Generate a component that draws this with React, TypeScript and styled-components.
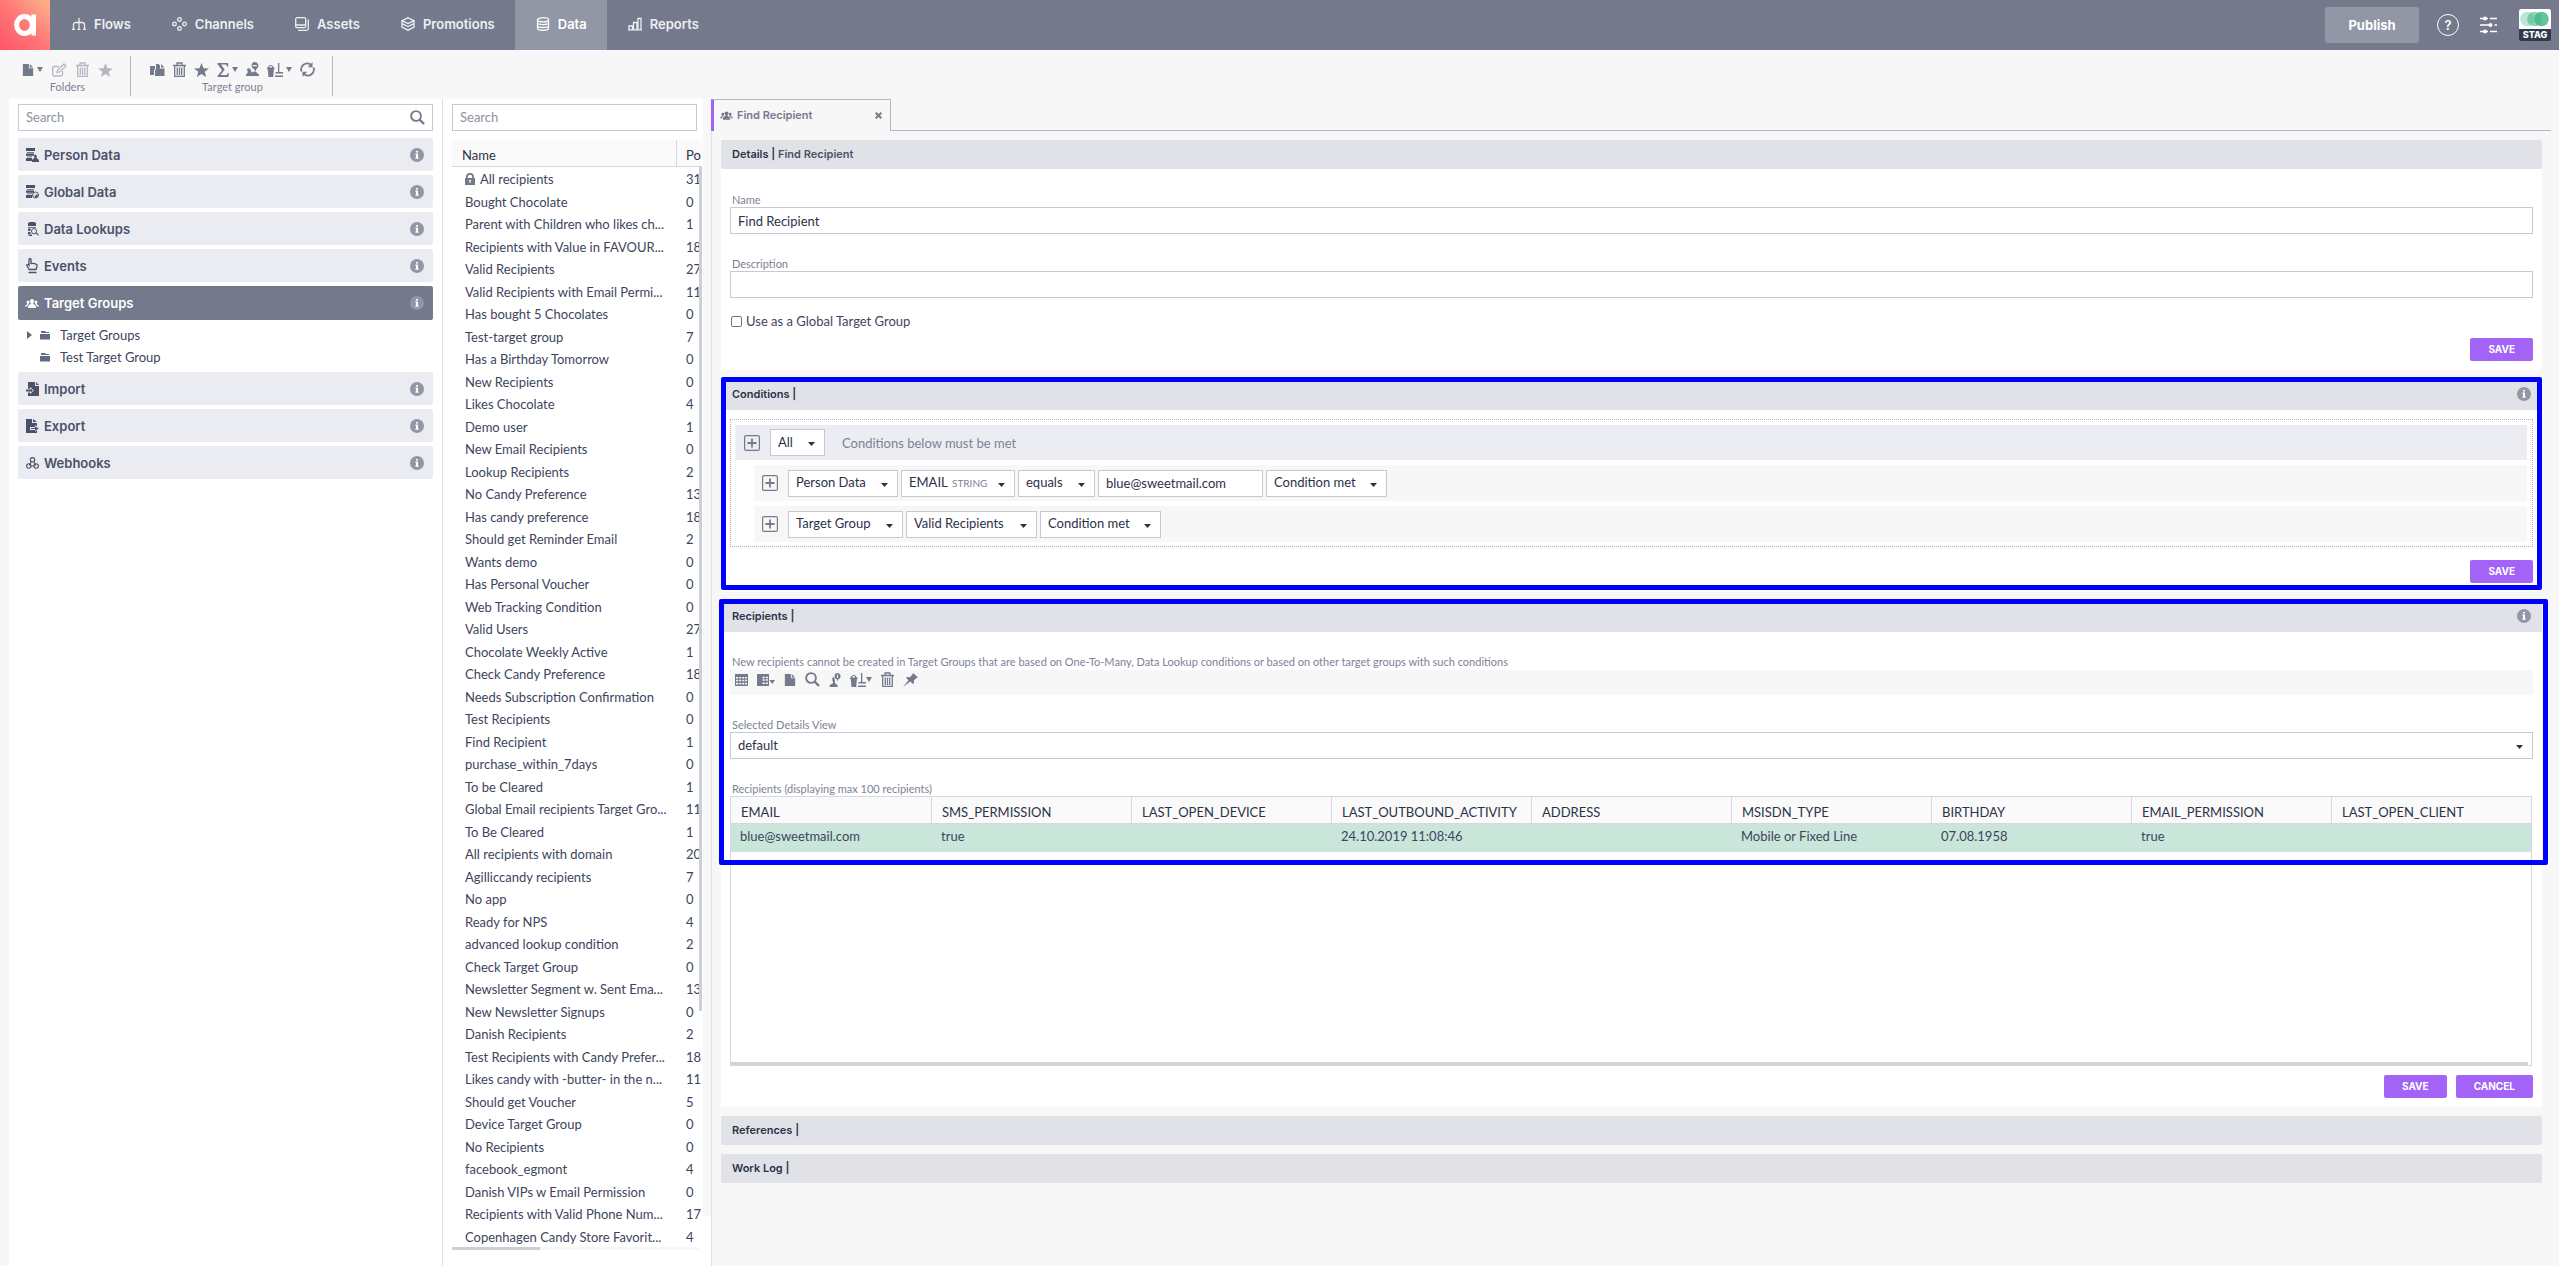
import React from 'react';
import styled, { createGlobalStyle } from 'styled-components';

const c = {
  bar: '#747a8c',
  barActive: '#9297a6',
  page: '#f7f7f7',
  ink: '#3d455c',
  dark: '#2b3247',
  muted: '#7c8294',
  line: '#c6c8d4',
  rule: '#b6bac8',
  head: '#e1e2e8',
  item: '#ebecf1',
  purple: '#a363f7',
};

const body = `Lato, "Open Sans", sans-serif`;
const title = `Inter, "Open Sans", sans-serif`;

const GlobalStyle = createGlobalStyle`
  * { box-sizing: border-box; }
  body { margin: 0; background: ${c.page}; color: ${c.ink}; font: 13px/16px ${body}; }
  button, input, select { font: inherit; color: inherit; margin: 0; }
  button { border: 0; background: none; padding: 0; cursor: pointer; }
  svg { display: block; flex: none; }
`;

/* ---------- icons ---------- */

type IconProps = { w?: number; h?: number };

const Svg = ({ w = 14, h = 14, box = '0 0 14 14', children }: IconProps & { box?: string; children: React.ReactNode }) => (
  <svg width={w} height={h} viewBox={box} fill="currentColor" aria-hidden="true">{children}</svg>
);
const Line = ({ w = 14, h = 14, box = '0 0 14 14', sw = 1.3, children }: IconProps & { box?: string; sw?: number; children: React.ReactNode }) => (
  <svg width={w} height={h} viewBox={box} fill="none" stroke="currentColor" strokeWidth={sw} aria-hidden="true">{children}</svg>
);

const FlowsIcon = () => (
  <Line><path d="M7 1v11.5M1.5 12.500V7.500a2 2 0 0 1 2-2h7a2 2 0 0 1 2 2v5M0 12.300h3M5.500 12.300h3M11 12.300h3" /></Line>
);
const ChannelsIcon = () => (
  <Line w={15} h={14} box="0 0 15 14"><circle cx="7.500" cy="2.500" r="1.800" /><circle cx="7.500" cy="11.500" r="1.800" /><circle cx="2.500" cy="7" r="1.800" /><circle cx="12.500" cy="7" r="1.800" /></Line>
);
const AssetsIcon = () => (
  <Line><rect x="0.700" y="0.700" width="10" height="10" rx="1.500" /><path d="M1 8h9.500M13.300 2.500v9a1.800 1.800 0 0 1-1.800 1.800H3" /></Line>
);
const PromotionsIcon = () => (
  <Line><path d="M7 .8l6 2.900-6 2.900-6-2.900zM1 3.700v3l6 2.900 6-2.900v-3M1 7v3.200L7 13.200l6-3V7" /></Line>
);
const DataIcon = () => (
  <Line><ellipse cx="7" cy="2.800" rx="5.500" ry="2.100" /><path d="M1.500 2.800v8.400c0 1.200 2.500 2.100 5.500 2.100s5.500-.9 5.500-2.100V2.800M1.500 5.600c0 1.200 2.500 2.100 5.500 2.100s5.500-.9 5.500-2.100M1.500 8.400c0 1.200 2.500 2.100 5.500 2.100s5.500-.9 5.500-2.100" /></Line>
);
const ReportsIcon = () => (
  <Line><path d="M1 12.500V9h3.500v3.500M5.500 12.500V5.500H9v7M10 12.500V1.500h3v11M0 12.800h14" /></Line>
);
const FileIcon = () => <Svg w={12}><path d="M1 0h7v5h5v9H1zM9 0l4 4H9z" /></Svg>;
const CaretIcon = () => <Svg w={6} h={5} box="0 0 6 5"><path d="M0 0h6L3 5z" /></Svg>;
const EditIcon = () => (
  <Line w={15} h={14} box="0 0 15 14"><path d="M10.500 8v3.500a1.500 1.500 0 0 1-1.500 1.500H2.200a1.500 1.500 0 0 1-1.500-1.500V5a1.500 1.500 0 0 1 1.500-1.500H7" /><path d="M5 9.500l.6-2.500L12 1l2 2-6.500 6z" /></Line>
);
const TrashIcon = () => (
  <Line w={13} h={15} box="0 0 13 15"><path d="M0 3.500h13M4 3V1h5v2M1.700 4v10.300h9.600V4M4.300 5.500v7.500M6.500 5.500v7.500M8.700 5.500v7.500" /></Line>
);
const StarIcon = () => <Svg w={15} h={14} box="0 0 15 14"><path d="M7.500 0l2 5.200 5.500.2-4.300 3.400L12.200 14 7.500 11 2.800 14l1.500-5.200L0 5.400l5.500-.2z" /></Svg>;
const CopyIcon = () => <Svg w={15} h={14} box="0 0 15 14"><path d="M0 3h5v3l-1 1v5H0zM5.500 1H9v4h.5M6 2h4v3.500h4.500V13H5V7.500L6 6zM11 1l3.500 3.500H11z" /></Svg>;
const SigmaIcon = () => <Svg w={12} h={14} box="0 0 12 14"><path d="M.5 0h10.500l.3 3.500h-1.200C9.800 2 9.300 1.600 8 1.600H4l3.700 5L3.500 12h5.200c1.300 0 1.800-.6 2.200-2h1.100l-.7 4H.5v-.9L5 7.300.5 1z" /></Svg>;
const PeopleIcon = ({ w = 14 }: IconProps) => (
  <Svg w={w} h={9} box="0 0 14 9"><circle cx="7" cy="2.200" r="2.100" /><circle cx="3" cy="3" r="1.500" /><circle cx="11" cy="3" r="1.500" /><path d="M5.800 3.500h2.400v1.500c1.600.5 2.800 1.300 2.800 4H3c0-2.700 1.200-3.500 2.800-4zM0 7.500C0 6 1.500 6 2.200 5.300V4h1.600v1.300c-1 .6-1.400 1.400-1.600 2.200zM14 7.500c0-1.500-1.500-1.500-2.200-2.200V4h-1.600v1.300c1 .6 1.400 1.400 1.600 2.200z" /></Svg>
);
const PeoplePinIcon = () => (
  <Svg w={13} h={15} box="0 0 13 15"><path fillRule="evenodd" d="M8.800 0a3.500 3.500 0 0 1 2 6.400L9.500 9.500 8 7A3.600 3.600 0 0 1 8.800 0zM6.800 3v1.200h4V3zM3.300 6.500a1.500 1.500 0 0 1 1.200 2.400c1 .4 1.500 1.100 1.700 1.900.4-.6.900-1 1.500-1.100 1.800-.9 3.300.6 3.600 1.800L13 12.500V14H0v-1.500l1.200-1c.1-.8.500-1.500 1-1.800A1.600 1.600 0 0 1 3.300 6.500z" /></Svg>
);
const BucketIcon = () => (
  <Svg w={16} h={14} box="0 0 16 14"><path d="M1 4.500C1 1 6.500 1 6.500 4.500h1V6h-.6l-.7 8H1.500L.7 6H0V4.500zM2.200 4.500h3C5 2.600 2.400 2.600 2.200 4.500z" /><path d="M11 0h1.300v9H16v1.500H8.500V9H11zM8 12.500h8V14H8z" /></Svg>
);
const RefreshIcon = () => (
  <Line w={15} h={15} box="0 0 15 15" sw={1.800}><path d="M1.500 9.500a6 6 0 0 1 9-7M13.500 5.500a6 6 0 0 1-9 7" /><path fill="currentColor" stroke="none" d="M12.500 0v5.200H7.800zM2.500 15V9.800h4.700z" /></Line>
);
const SearchIcon = () => <Line w={15} h={15} box="0 0 15 15" sw={1.900}><circle cx="6" cy="6" r="4.900" /><path d="M9.500 9.500l4.500 4.500" strokeWidth="2.400" /></Line>;
const InfoIcon = () => (
  <svg width="14" height="14" viewBox="0 0 14 14" aria-hidden="true"><circle cx="7" cy="7" r="7" fill={c.barActive} /><path fill="#fff" d="M6 3h2v1.600H6zM5.400 5.600H8v4h.7v1.200H5.400V9.600H6V6.800h-.6z" /></svg>
);
const stack = <path d="M0 0h9v3H0zM1 4h7v.8H1zM0 5.500h8v2.300H0zM1 8.500h5v.8H1zM0 10h6v3H0z" />;
const PersonDataIcon = () => <Svg w={13} h={14} box="0 0 13 14">{stack}<path d="M7 11c0-.5 1.200-.8 1.600-1C8 9.500 7.800 6.500 9.300 6.500S11 9.500 10.300 10c.4.300 2.700 1 2.700 3v1H6v-2z" /></Svg>;
const GlobalDataIcon = () => <Svg w={13} h={14} box="0 0 13 14">{stack}<circle cx="9.500" cy="10" r="3" fill="none" stroke="currentColor" /><path d="M7 9l2 2 2-2 1 2-2 2z" /></Svg>;
const LookupIcon = () => (
  <Svg w={13} h={14} box="0 0 13 14"><path d="M2 1c2-1.500 6-1.500 8 0v3H2zM2 5h8v.8H2zM2 6.500h3L4 9H2zM2 10h2l1 2H2zM2 12.600h4V14H4c-1.500 0-2-.5-2-1.400z" /><circle cx="8" cy="9.200" r="2.600" fill="none" stroke="currentColor" /><path d="M9.800 11.300l.8-.8 2.400 2.400-.8.800z" /></Svg>
);
const EventsIcon = () => (
  <Line w={12} h={16} box="0 0 12 16"><path d="M3 11L.8 7.500C.5 6.500 2 6 3 7.200V1.500c0-1.200 2-1.200 2 0v4c2-.3 5.500.2 6 1.500.2 1.500-.5 3-1 4.500H3.200zM2.500 14.500h8" /></Line>
);
const ImportIcon = () => <Svg w={13} h={14} box="0 0 13 14"><path fillRule="evenodd" d="M2 0h7v4h4v10H2v-3.500h2V12l4-3.500L4 5v1.800H2zM10 0l3 3h-3zM0 7.500h5V6.800l2 1.700-2 1.700v-.8H0z" /></Svg>;
const ExportIcon = () => <Svg w={13} h={14} box="0 0 13 14"><path fillRule="evenodd" d="M0 0h6v4h5v3.500L9 6v2H4v3h5v1.500l2-1.500v3H0zM7 0l4 3H7zM5 9h4V7.500l4 2-4 2V10H5z" /></Svg>;
const WebhookIcon = () => (
  <Line w={13} h={12} box="0 0 13 12" sw={1.100}><circle cx="6.500" cy="2.800" r="2.200" /><circle cx="2.800" cy="9" r="2.200" /><circle cx="10.200" cy="9" r="2.200" /><path d="M5.500 4.500L3 8.500M7.500 4.500L10 8.500M4.800 9h3.400" /></Line>
);
const FolderIcon = () => <Svg w={10} h={9} box="0 0 10 9"><path d="M1 0h4l1 1h3v1H1zM0 3h10v5.500H0z" /></Svg>;
const LockIcon = () => <Svg w={10} h={12} box="0 0 10 12"><path fillRule="evenodd" d="M1 5V4a4 4 0 0 1 8 0v1h1v7H0V5zM2.800 5h4.400V4a2.200 2.200 0 0 0-4.400 0zM4 7v1.200h.6V10h.9V8.200H6V7z" /></Svg>;
const PlusBox = () => <Line w={16} h={16} box="0 0 16 16" sw={1.200}><rect x="0.600" y="0.600" width="14.800" height="14.800" rx="1.500" /><path d="M3.500 8h9M8 3.500v9" strokeWidth="1.800" /></Line>;
const GridIcon = () => <Svg w={13} h={12} box="0 0 13 12"><path fillRule="evenodd" d="M0 0h13v12H0zM1 3v1.500h2.300V3zM4.300 3v1.500h2V3zM7.300 3v1.500h2V3zM10.200 3v1.500H12V3zM1 5.800v1.500h2.300V5.800zM4.300 5.800v1.500h2V5.800zM7.300 5.800v1.500h2V5.800zM10.200 5.800v1.500H12V5.800zM1 8.800v1.700h2.300V8.800zM4.300 8.800v1.700h2V8.800zM7.300 8.800v1.700h2V8.800zM10.200 8.800v1.700H12V8.800z" /></Svg>;
const ColumnsIcon = () => <Svg w={18} h={12} box="0 0 18 12"><path fillRule="evenodd" d="M0 0h12v12H0zM5.500 2.800v1.400h2.300V2.800zM8.700 2.800v1.400H11V2.800zM5.500 5.300v1.400h2.300V5.300zM8.700 5.300v1.400H11V5.300zM5.500 8.500v1.400h2.300V8.500zM8.700 8.500v1.400H11V8.500z" /><path d="M12.500 6H18l-2.800 4z" /></Svg>;
const PersonPinIcon = () => <Svg w={12} h={14} box="0 0 12 14"><path fillRule="evenodd" d="M8.500 0a3.200 3.200 0 0 1 1 6.200L8 8.500V6.300A3.200 3.200 0 0 1 8.500 0zM8 1.500v3.500h1V1.500zM5 4c-2 0-2.300 3-1 4.500v1.800C2 11 .5 11.500.5 14h8.300c0-2-1-2.800-2.800-3.700V8z" /></Svg>;
const PinIcon = () => <Svg w={15} h={14} box="0 0 15 14"><path d="M10 0l5 4.500-1.500.5-2.700 2.500.2 2.700-1 .8L7.200 8.600 0 14l5.500-6.800L3 4.800l.8-.8 3 .2L9.500 1.500z" /></Svg>;
const SlidersIcon = () => <Line w={17} h={18} box="0 0 17 18" sw={1.400}><path d="M0 2.500h8M10 2.500h7M0 9h12M14.500 9H17M0 15.500h8M10 15.500h7" /><g fill="currentColor" stroke="none"><circle cx="5" cy="2.500" r="2" /><circle cx="10.500" cy="9" r="2" /><circle cx="5" cy="15.500" r="2" /></g></Line>;
const LogoIcon = () => (
  <svg width="22" height="22" viewBox="0 0 22 22" fill="none" stroke="#fff" aria-hidden="true"><ellipse cx="10.500" cy="11" rx="7.900" ry="8.400" strokeWidth="5" /><path d="M19.700.5v21" strokeWidth="4.600" /></svg>
);
const CirclesLogo = () => (
  <svg width="32" height="20" viewBox="0 0 32 20" aria-hidden="true"><rect width="32" height="20" fill="#fff" /><circle cx="8.500" cy="10" r="7.300" fill="#3cb483" opacity=".35" /><circle cx="15.500" cy="10" r="7.300" fill="#3cb483" opacity=".55" /><circle cx="22.500" cy="10" r="7.300" fill="#3cb483" opacity=".8" /></svg>
);

/* ---------- top bar ---------- */

const Page = styled.div`
  display: flex;
  flex-direction: column;
  min-height: 100vh;
`;
const TopBar = styled.header`
  display: flex;
  align-items: stretch;
  height: 50px;
  background: ${c.bar};
  padding-right: 8px;
`;
const Logo = styled.a`
  display: flex;
  align-items: center;
  justify-content: center;
  width: 50px;
  background: linear-gradient(45deg, #ff5468, #ff7877 50%, #fbb58a);
`;
const Nav = styled.nav`
  display: flex;
  flex: 1;
  padding-left: 1px;
`;
const NavLink = styled.a<{ $active?: boolean }>`
  display: flex;
  align-items: center;
  gap: 8px;
  padding: 0 20px 2px 21px;
  color: ${p => (p.$active ? '#fff' : '#eeeff2')};
  background: ${p => (p.$active ? c.barActive : 'transparent')};
  font: 600 13px/16px ${title};
  text-decoration: none;
`;
const TopActions = styled.div`
  display: flex;
  align-items: center;
  color: #fff;
`;
const Publish = styled.button`
  width: 94px;
  height: 36px;
  margin-right: 18px;
  border-radius: 2px;
  background: ${c.barActive};
  color: #fff;
  font: 700 13px/16px ${title};
`;
const Help = styled.button`
  width: 22px;
  height: 22px;
  margin-right: 21px;
  border: 1px solid #fff;
  border-radius: 50%;
  color: #fff;
  font: 600 13px/16px ${title};
`;
const SettingsButton = styled.button`
  margin-right: 22px;
  color: #fff;
`;
const Account = styled.button`
  width: 32px;
  border-radius: 2px;
  overflow: hidden;
  background: #2f3a4d;
  color: #fff;
  font: 800 9px/12px ${title};
  text-align: center;
`;

/* ---------- toolbar ---------- */

const Toolbar = styled.div`
  display: flex;
  height: 49px;
  padding: 6px 0 3px 3px;
`;
const ToolGroup = styled.section`
  display: flex;
  flex-direction: column;
  align-items: center;
  gap: 1px;
  padding: 5px 17px 0 19px;
  border-right: 1px solid ${c.rule};
  color: ${c.muted};
  font-size: 11px;
`;
const Tools = styled.div<{ $gap: number }>`
  display: flex;
  align-items: center;
  gap: ${p => p.$gap}px;
  height: 17px;
`;
const Tool = styled.button<{ $dim?: boolean; $tight?: boolean }>`
  display: flex;
  align-items: center;
  gap: ${p => (p.$tight ? 0 : 3)}px;
  color: ${c.bar};
  opacity: ${p => (p.$dim ? 0.5 : 1)};
`;

/* ---------- workspace ---------- */

const Workspace = styled.div`
  display: flex;
  flex: 1;
  padding-left: 9px;
`;
const Sidebar = styled.aside`
  width: 434px;
  padding: 5px 9px 0;
  background: #fff;
  border-right: 1px solid #dfe0e6;
`;
const SearchBox = styled.div`
  display: flex;
  align-items: center;
  height: 27px;
  padding: 0 7px 1px;
  border: 1px solid ${c.line};
  background: #fff;
  color: ${c.bar};
`;
const SearchInput = styled.input`
  flex: 1;
  min-width: 0;
  border: 0;
  padding: 0;
  outline: 0;
  background: none;
  &::placeholder { color: #8c91a1; opacity: 1; }
`;
const Menu = styled.ul`
  display: flex;
  flex-direction: column;
  gap: 4px;
  margin: 7px 0 0;
  padding: 0;
  list-style: none;
`;
const MenuButton = styled.button<{ $active?: boolean }>`
  display: grid;
  grid-template-columns: 14px 1fr 14px;
  align-items: center;
  column-gap: 5px;
  width: 100%;
  height: ${p => (p.$active ? 34 : 33)}px;
  padding: 0 9px 0 7px;
  border-radius: 2px;
  background: ${p => (p.$active ? c.bar : c.item)};
  color: ${p => (p.$active ? '#fff' : '#4a5168')};
  font: 600 13px/16px ${title};
  text-align: left;
  svg { justify-self: center; }
`;
const Tree = styled.ul`
  margin: 0;
  padding: 4px 0 0;
  list-style: none;
`;
const TreeRow = styled.li`
  display: grid;
  grid-template-columns: 13px 20px 1fr;
  align-items: center;
  height: 22px;
  padding-left: 9px;
  color: #626a82;
`;
const TreeLink = styled.a`
  color: ${c.ink};
  text-decoration: none;
`;

const ListPane = styled.aside`
  display: flex;
  width: 268px;
  background: #fff;
`;
const ListColumn = styled.div`
  flex: 1;
  padding: 5px 1px 16px 9px;
  min-width: 0;
`;
const Splitter = styled.div`
  width: 8px;
  margin-bottom: 50px;
  background: ${c.page};
`;
const ListSearch = styled(SearchBox)`
  margin-right: 5px;
`;
const ListFrame = styled.div`
  position: relative;
  margin-top: 9px;
  overflow: hidden;
`;
const GroupTable = styled.table`
  width: 100%;
  table-layout: fixed;
  border-collapse: separate;
  border-spacing: 0;
  white-space: nowrap;
  text-align: left;
  th {
    height: 27px;
    padding: 3px 0 0 10px;
    background: #fafafa;
    border-bottom: 1px solid #d7d8dd;
    font-weight: 400;
    color: ${c.dark};
    overflow: hidden;
  }
  th + th { border-left: 1px solid #d7d8dd; padding-left: 9px; }
  td { height: 22px; padding: 2px 0 0 13px; overflow: hidden; }
  td + td { padding-left: 10px; }
  tr:nth-child(even) td { height: 23px; }
`;
const NameCol = styled.col`
  width: 224px;
`;
const LockedName = styled.span`
  display: flex;
  align-items: center;
  gap: 5px;
  svg { color: ${c.bar}; }
`;
const VerticalThumb = styled.div`
  position: absolute;
  right: 0;
  top: 27px;
  width: 3px;
  height: 76%;
  background: #cdcfd8;
`;
const HorizontalTrack = styled.div`
  height: 3px;
  margin-right: 3px;
  background: ${c.page};
`;
const HorizontalThumb = styled.div`
  width: 88px;
  height: 3px;
  background: #cdcfd8;
`;

const Main = styled.main`
  flex: 1;
  min-width: 0;
  padding-right: 8px;
  border-left: 1px solid #dfe0e6;
`;
const TabStrip = styled.div`
  display: flex;
  height: 32px;
  margin-left: -1px;
`;
const Tab = styled.div`
  display: flex;
  align-items: center;
  gap: 4px;
  width: 180px;
  padding: 0 8px 1px 6px;
  border: 1px solid ${c.rule};
  border-left: 3px solid ${c.purple};
  border-bottom: 0;
  color: ${c.bar};
  font: 600 11px/16px ${title};
`;
const TabName = styled.span`
  flex: 1;
`;
const TabRest = styled.div`
  flex: 1;
  border-bottom: 1px solid ${c.rule};
`;
const Stack = styled.div`
  display: flex;
  flex-direction: column;
  gap: 9px;
  padding: 9px 9px 40px;
`;
const Panel = styled.section`
  position: relative;
`;
const PanelHead = styled.h2<{ $tall?: boolean }>`
  display: flex;
  align-items: center;
  justify-content: space-between;
  height: ${p => (p.$tall ? 31 : 29)}px;
  margin: 0;
  padding: 0 11px 1px;
  border-radius: 2px;
  background: ${c.head};
  color: ${c.dark};
  font: 600 11px/16px ${title};
`;
const HeadDetail = styled.span`
  color: #4a5168;
`;
const PanelBody = styled.div<{ $top?: number }>`
  padding: ${p => p.$top || 0}px 9px 9px;
  background: #fff;
`;
const Label = styled.label`
  display: block;
  padding: 22px 2px 0;
  color: ${c.muted};
  font-size: 11px;
  line-height: 15px;
`;
const TextField = styled.input<{ $w?: number }>`
  display: block;
  width: ${p => (p.$w ? `${p.$w}px` : '100%')};
  height: 27px;
  padding: 0 7px;
  border: 1px solid ${c.line};
  background: #fff;
  color: ${c.dark};
`;
const CheckRow = styled.label`
  display: flex;
  align-items: center;
  gap: 4px;
  padding: 15px 1px 9px;
`;
const Tick = styled.input`
  appearance: none;
  width: 11px;
  height: 11px;
  border: 1px solid #6f7580;
  border-radius: 2px;
  background: #fff;
`;
const Actions = styled.div<{ $top?: number }>`
  display: flex;
  justify-content: flex-end;
  gap: 9px;
  padding-top: ${p => p.$top || 0}px;
`;
const Action = styled.button`
  height: 23px;
  padding: 0 18px 1px;
  border-radius: 2px;
  background: ${c.purple};
  color: #fff;
  font: 700 10px/14px ${title};
`;
const Highlight = styled.div<{ $x: number; $right: number; $h: number }>`
  position: absolute;
  top: -2px;
  left: ${p => p.$x}px;
  right: ${p => p.$right}px;
  height: ${p => p.$h}px;
  border: 5px solid #0000ff;
  border-radius: 2px;
  pointer-events: none;
`;

/* ---------- conditions ---------- */

const Conditions = styled.div`
  display: flex;
  flex-direction: column;
  gap: 5px;
  padding: 5px 5px 4px;
  border: 1px dotted #b0b3bd;
`;
const ConditionRow = styled.div<{ $root?: boolean }>`
  display: flex;
  align-items: center;
  gap: 3px;
  height: ${p => (p.$root ? 35 : 36)}px;
  margin-left: ${p => (p.$root ? 0 : 18)}px;
  padding-left: 8px;
  background: ${p => (p.$root ? '#ecedf2' : c.page)};
`;
const AddButton = styled.button`
  margin-right: 7px;
  color: ${c.bar};
`;
const Hint = styled.span`
  margin-left: 14px;
  color: ${c.muted};
`;
const Picker = styled.span<{ $w?: number }>`
  display: flex;
  align-items: center;
  width: ${p => (p.$w ? `${p.$w}px` : '100%')};
  height: 27px;
  padding: 0 9px 0 7px;
  border: 1px solid ${c.line};
  background: #fff;
  color: ${c.dark};
`;
const PickerSelect = styled.select<{ $fit?: boolean }>`
  appearance: none;
  flex: ${p => (p.$fit ? 'none' : 1)};
  min-width: 0;
  padding: 0 0 2px;
  border: 0;
  outline: 0;
  background: none;
`;
const TypeNote = styled.small`
  flex: 1;
  padding-left: 4px;
  color: ${c.muted};
  font-size: 10px;
`;
const CaretSlot = styled.span`
  padding-top: 3px;
`;

/* ---------- recipients ---------- */

const Note = styled.p`
  margin: 0;
  padding: 22px 2px 0;
  color: ${c.muted};
  font-size: 11px;
  line-height: 16px;
`;
const RecipientTools = styled.div`
  display: flex;
  align-items: center;
  gap: 9px;
  height: 25px;
  padding: 0 5px 6px;
  background: ${c.page};
`;
const Grid = styled.div`
  height: 270px;
  margin-right: 1px;
  border: 1px solid #d7d8dd;
  display: flex;
  flex-direction: column;
  justify-content: space-between;
`;
const GridTable = styled.table`
  width: 100%;
  table-layout: fixed;
  border-collapse: separate;
  border-spacing: 0;
  text-align: left;
  th {
    height: 27px;
    padding: 4px 0 0 10px;
    background: #fafafa;
    border-bottom: 1px solid #d7d8dd;
    color: ${c.dark};
    font-weight: 400;
    white-space: nowrap;
  }
  th + th { border-left: 1px solid #d7d8dd; }
  td { height: 28px; padding: 0 0 5px 9px; background: #cae5da; }
  td + td { padding-left: 10px; }
`;
const GridThumb = styled.div`
  height: 3px;
  margin-right: 3px;
  background: #d0d2da;
`;
const TableLabel = styled.div`
  padding: 22px 2px 0;
  color: ${c.muted};
  font-size: 11px;
  line-height: 15px;
`;

const navItems: [string, React.FC][] = [
  ['Flows', FlowsIcon], ['Channels', ChannelsIcon], ['Assets', AssetsIcon],
  ['Promotions', PromotionsIcon], ['Data', DataIcon], ['Reports', ReportsIcon],
];

const menuItems: [string, React.FC][] = [
  ['Person Data', PersonDataIcon], ['Global Data', GlobalDataIcon], ['Data Lookups', LookupIcon],
  ['Events', EventsIcon], ['Target Groups', PeopleIcon], ['Import', ImportIcon],
  ['Export', ExportIcon], ['Webhooks', WebhookIcon],
];

const groups: [string, string][] = [
  ['All recipients', '31'], ['Bought Chocolate', '0'], ['Parent with Children who likes ch...', '1'],
  ['Recipients with Value in FAVOUR...', '18'], ['Valid Recipients', '27'], ['Valid Recipients with Email Permi...', '11'],
  ['Has bought 5 Chocolates', '0'], ['Test-target group', '7'], ['Has a Birthday Tomorrow', '0'],
  ['New Recipients', '0'], ['Likes Chocolate', '4'], ['Demo user', '1'], ['New Email Recipients', '0'],
  ['Lookup Recipients', '2'], ['No Candy Preference', '13'], ['Has candy preference', '18'],
  ['Should get Reminder Email', '2'], ['Wants demo', '0'], ['Has Personal Voucher', '0'],
  ['Web Tracking Condition', '0'], ['Valid Users', '27'], ['Chocolate Weekly Active', '1'],
  ['Check Candy Preference', '18'], ['Needs Subscription Confirmation', '0'], ['Test Recipients', '0'],
  ['Find Recipient', '1'], ['purchase_within_7days', '0'], ['To be Cleared', '1'],
  ['Global Email recipients Target Gro...', '11'], ['To Be Cleared', '1'], ['All recipients with domain', '20'],
  ['Agilliccandy recipients', '7'], ['No app', '0'], ['Ready for NPS', '4'], ['advanced lookup condition', '2'],
  ['Check Target Group', '0'], ['Newsletter Segment w. Sent Ema...', '13'], ['New Newsletter Signups', '0'],
  ['Danish Recipients', '2'], ['Test Recipients with Candy Prefer...', '18'],
  ['Likes candy with -butter- in the n...', '11'], ['Should get Voucher', '5'], ['Device Target Group', '0'],
  ['No Recipients', '0'], ['facebook_egmont', '4'], ['Danish VIPs w Email Permission', '0'],
  ['Recipients with Valid Phone Num...', '17'], ['Copenhagen Candy Store Favorit...', '4'],
];

const fields: [string, string][] = [
  ['EMAIL', 'blue@sweetmail.com'], ['SMS_PERMISSION', 'true'], ['LAST_OPEN_DEVICE', ''],
  ['LAST_OUTBOUND_ACTIVITY', '24.10.2019 11:08:46'], ['ADDRESS', ''], ['MSISDN_TYPE', 'Mobile or Fixed Line'],
  ['BIRTHDAY', '07.08.1958'], ['EMAIL_PERMISSION', 'true'], ['LAST_OPEN_CLIENT', ''],
];

const Choice = ({ value, w, note, label, id }: { value: string; w?: number; note?: string; label?: string; id?: string }) => (
  <Picker $w={w}>
    <PickerSelect id={id} aria-label={label} $fit={!!note} defaultValue={value}>
      <option>{value}</option>
    </PickerSelect>
    {note && <TypeNote>{note}</TypeNote>}
    <CaretSlot><Svg w={7} h={4} box="0 0 7 4"><path d="M0 0h7L3.500 4z" /></Svg></CaretSlot>
  </Picker>
);

const Add = () => <AddButton aria-label="Add condition"><PlusBox /></AddButton>;

export default function App() {
  return (
    <Page>
      <GlobalStyle />
      <TopBar>
        <Logo href="#" aria-label="Home"><LogoIcon /></Logo>
        <Nav>
          {navItems.map(([name, Icon]) => (
            <NavLink key={name} href="#" $active={name === 'Data'}><Icon />{name}</NavLink>
          ))}
        </Nav>
        <TopActions>
          <Publish>Publish</Publish>
          <Help aria-label="Help">?</Help>
          <SettingsButton aria-label="Settings"><SlidersIcon /></SettingsButton>
          <Account><CirclesLogo />STAG</Account>
        </TopActions>
      </TopBar>

      <Toolbar>
        <ToolGroup>
          <Tools $gap={9}>
            <Tool aria-label="New folder"><FileIcon /><CaretIcon /></Tool>
            <Tool $dim aria-label="Edit folder"><EditIcon /></Tool>
            <Tool $dim aria-label="Delete folder"><TrashIcon /></Tool>
            <Tool $dim aria-label="Favourite folder"><StarIcon /></Tool>
          </Tools>
          Folders
        </ToolGroup>
        <ToolGroup>
          <Tools $gap={8}>
            <Tool aria-label="Copy"><CopyIcon /></Tool>
            <Tool aria-label="Delete"><TrashIcon /></Tool>
            <Tool aria-label="Favourite"><StarIcon /></Tool>
            <Tool aria-label="Calculate"><SigmaIcon /><CaretIcon /></Tool>
            <Tool aria-label="People"><PeoplePinIcon /></Tool>
            <Tool aria-label="Clear"><BucketIcon /><CaretIcon /></Tool>
            <Tool aria-label="Refresh"><RefreshIcon /></Tool>
          </Tools>
          Target group
        </ToolGroup>
      </Toolbar>

      <Workspace>
        <Sidebar>
          <SearchBox>
            <SearchInput placeholder="Search" aria-label="Search folders" />
            <SearchIcon />
          </SearchBox>
          <Menu>
            {menuItems.map(([name, Icon]) => (
              <li key={name}>
                <MenuButton $active={name === 'Target Groups'}><Icon />{name}<InfoIcon /></MenuButton>
                {name === 'Target Groups' && (
                  <Tree>
                    <TreeRow><Svg w={5} h={8} box="0 0 5 8"><path d="M0 0l5 4-5 4z" /></Svg><FolderIcon /><TreeLink href="#">Target Groups</TreeLink></TreeRow>
                    <TreeRow><span /><FolderIcon /><TreeLink href="#">Test Target Group</TreeLink></TreeRow>
                  </Tree>
                )}
              </li>
            ))}
          </Menu>
        </Sidebar>

        <ListPane>
          <ListColumn>
            <ListSearch><SearchInput placeholder="Search" aria-label="Search target groups" /></ListSearch>
            <ListFrame>
              <GroupTable>
                <colgroup><NameCol /><col /></colgroup>
                <thead><tr><th>Name</th><th>Po</th></tr></thead>
                <tbody>
                  {groups.map(([name, count], i) => (
                    <tr key={name}>
                      <td>{i === 0 ? <LockedName><LockIcon />{name}</LockedName> : name}</td>
                      <td>{count}</td>
                    </tr>
                  ))}
                </tbody>
              </GroupTable>
              <VerticalThumb />
              <HorizontalTrack><HorizontalThumb /></HorizontalTrack>
            </ListFrame>
          </ListColumn>
          <Splitter />
        </ListPane>

        <Main>
          <TabStrip>
            <Tab>
              <PeopleIcon w={13} />
              <TabName>Find Recipient</TabName>
              <button aria-label="Close tab"><Line w={7} h={7} box="0 0 7 7" sw={2}><path d="M.7.7l5.600 5.600M6.300.7L.7 6.300" /></Line></button>
            </Tab>
            <TabRest />
          </TabStrip>
          <Stack>
            <Panel>
              <PanelHead><span>Details | <HeadDetail>Find Recipient</HeadDetail></span></PanelHead>
              <PanelBody $top={1}>
                <Label htmlFor="name">Name</Label>
                <TextField id="name" defaultValue="Find Recipient" />
                <Label htmlFor="description">Description</Label>
                <TextField id="description" />
                <CheckRow><Tick type="checkbox" />Use as a Global Target Group</CheckRow>
                <Actions><Action>SAVE</Action></Actions>
              </PanelBody>
            </Panel>

            <Panel>
              <PanelHead $tall>Conditions |<InfoIcon /></PanelHead>
              <PanelBody $top={9}>
                <Conditions>
                  <ConditionRow $root>
                    <Add />
                    <Choice label="Match" value="All" w={55} />
                    <Hint>Conditions below must be met</Hint>
                  </ConditionRow>
                  <ConditionRow>
                    <Add />
                    <Choice label="Source" value="Person Data" w={110} />
                    <Choice label="Field" value="EMAIL" note="STRING" w={114} />
                    <Choice label="Operator" value="equals" w={77} />
                    <TextField aria-label="Value" defaultValue="blue@sweetmail.com" $w={165} />
                    <Choice label="Result" value="Condition met" w={121} />
                  </ConditionRow>
                  <ConditionRow>
                    <Add />
                    <Choice label="Source" value="Target Group" w={115} />
                    <Choice label="Group" value="Valid Recipients" w={131} />
                    <Choice label="Result" value="Condition met" w={121} />
                  </ConditionRow>
                </Conditions>
                <Actions $top={13}><Action>SAVE</Action></Actions>
              </PanelBody>
              <Highlight $x={0} $right={0} $h={213} />
            </Panel>

            <Panel>
              <PanelHead $tall>Recipients |<InfoIcon /></PanelHead>
              <PanelBody>
                <Note>New recipients cannot be created in Target Groups that are based on One-To-Many, Data Lookup conditions or based on other target groups with such conditions</Note>
                <RecipientTools>
                  <Tool aria-label="Table view"><GridIcon /></Tool>
                  <Tool aria-label="Columns"><ColumnsIcon /></Tool>
                  <Tool aria-label="New recipient"><FileIcon /></Tool>
                  <Tool aria-label="Find"><SearchIcon /></Tool>
                  <Tool aria-label="Person"><PersonPinIcon /></Tool>
                  <Tool $tight aria-label="Clear"><BucketIcon /><CaretIcon /></Tool>
                  <Tool aria-label="Delete"><TrashIcon /></Tool>
                  <Tool aria-label="Pin"><PinIcon /></Tool>
                </RecipientTools>
                <Label htmlFor="view">Selected Details View</Label>
                <Choice id="view" value="default" />
                <TableLabel id="recipients-label">Recipients (displaying max 100 recipients)</TableLabel>
                <Grid>
                  <GridTable aria-labelledby="recipients-label">
                    <thead><tr>{fields.map(([name]) => <th key={name}>{name}</th>)}</tr></thead>
                    <tbody><tr>{fields.map(([name, value]) => <td key={name}>{value}</td>)}</tr></tbody>
                  </GridTable>
                  <GridThumb />
                </Grid>
                <Actions $top={9}><Action>SAVE</Action><Action>CANCEL</Action></Actions>
              </PanelBody>
              <Highlight $x={-2} $right={-6} $h={266} />
            </Panel>

            <PanelHead>References |</PanelHead>
            <PanelHead>Work Log |</PanelHead>
          </Stack>
        </Main>
      </Workspace>
    </Page>
  );
}
